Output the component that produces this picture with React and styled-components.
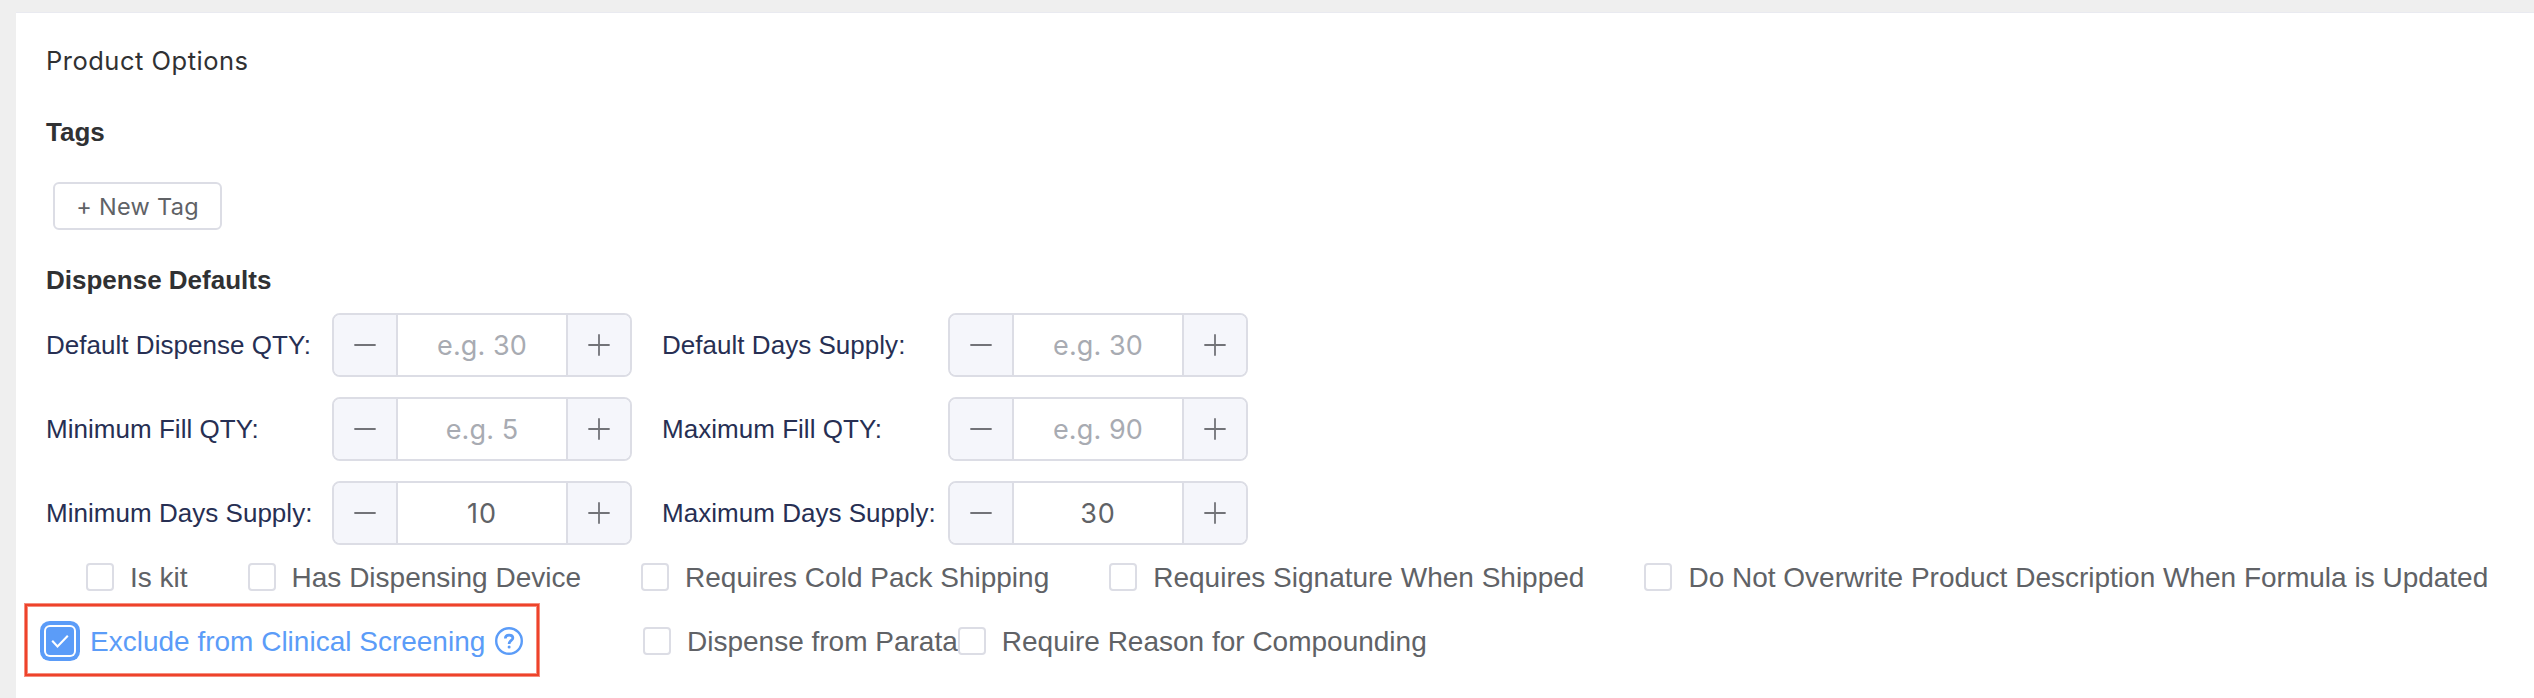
import React, { useState } from "react";
import styled, { createGlobalStyle, css } from "styled-components";

const color = {
  page: "#efefef",
  line: "#dcdde5",
  heading: "#303133",
  label: "#272f53",
  text: "#606266",
  muted: "#a8abb2",
  fill: "#f5f6fb",
  primary: "#5b9cf8",
  alert: "#ee432a",
};

const GlobalStyle = createGlobalStyle`
  *, *::before, *::after { box-sizing: border-box; }
  body {
    margin: 0;
    background: ${color.page};
    font-family: "Liberation Sans", Helvetica, Arial, sans-serif;
  }
`;

const Page = styled.div`
  height: 698px;
  padding: 12px 0 0 16px;
  overflow: hidden;
  background: ${color.page};
`;

const Panel = styled.section`
  height: 100%;
  padding: 28px 0 0 30px;
  border-top: 1px solid #e9eaf0;
  background: #fff;
`;

const Title = styled.h2`
  margin: 0;
  font: 400 25.5px/40px Inter, sans-serif;
  letter-spacing: 0.5px;
  color: ${color.heading};
`;

const SectionHeading = styled.h3`
  margin: ${(p) => p.$top}px 0 0;
  font-size: 26px;
  font-weight: 700;
  line-height: 40px;
  color: ${color.heading};
`;

const TagButton = styled.button`
  display: block;
  width: 169px;
  height: 48px;
  margin: 30px 0 0 7px;
  padding: 1px 0 0;
  border: 2px solid ${color.line};
  border-radius: 6px;
  background: #fff;
  font: 400 23.5px/43px Inter, sans-serif;
  letter-spacing: 0.3px;
  color: ${color.text};
`;

const DefaultsGrid = styled.div`
  display: grid;
  grid-template-columns: 586px 586px;
  gap: 20px 30px;
  margin-top: 13px;
`;

const Field = styled.div`
  display: flex;
  align-items: center;
`;

const FieldLabel = styled.span`
  width: 286px;
  font-size: 26px;
  line-height: 40px;
  letter-spacing: 0.03px;
  white-space: nowrap;
  color: ${color.label};
`;

const Stepper = styled.div`
  display: flex;
  width: 300px;
  height: 64px;
  overflow: hidden;
  border: 2px solid ${color.line};
  border-radius: 8px;
  background: #fff;
`;

const StepButton = styled.button`
  display: flex;
  flex: none;
  align-items: center;
  justify-content: center;
  width: 64px;
  padding: 0;
  border: 0 solid ${color.line};
  ${(p) => (p.$side === "left" ? "border-right-width: 2px;" : "border-left-width: 2px;")}
  background: ${color.fill};
  color: #727378;
`;

const StepInput = styled.input`
  flex: 1;
  min-width: 0;
  padding: 2px 0 0;
  border: 0;
  outline: 0;
  background: transparent;
  font: 400 27px/58px Inter, sans-serif;
  letter-spacing: 1px;
  text-align: center;
  color: ${color.text};

  &::placeholder {
    color: ${color.muted};
    letter-spacing: 0.1px;
    opacity: 1;
  }
`;

const CheckRow = styled.div`
  display: flex;
  align-items: center;
  height: ${(p) => p.$height}px;
  margin: ${(p) => p.$top}px 0 0 ${(p) => p.$left}px;
`;

const CheckLabel = styled.label`
  display: flex;
  flex: none;
  align-items: center;
  gap: 16px;
  margin-right: ${(p) => p.$after}px;
  font-size: 28px;
  line-height: 28px;
  white-space: nowrap;
  color: ${(p) => (p.$checked ? color.primary : color.text)};
`;

const CheckText = styled.span`
  height: 28px;
  line-height: 30px;
`;

const HiddenInput = styled.input`
  position: absolute;
  opacity: 0;
  pointer-events: none;
`;

const Box = styled.span`
  display: flex;
  width: 28px;
  height: 28px;
  border-radius: 4px;
  ${(p) =>
    p.$checked
      ? css`
          background: ${color.primary};
          box-shadow: 0 0 0 2px #fff, 0 0 0 6px ${color.primary};
        `
      : css`
          border: 2px solid ${color.line};
          background: #fff;
        `}
`;

const Highlight = styled.div`
  display: flex;
  flex: none;
  align-items: center;
  align-self: flex-start;
  width: 514px;
  height: 72px;
  margin-right: 104px;
  padding: 2px 0 0 19px;
  border: 2px solid ${color.alert};
  box-shadow: 0 0 0 1px rgba(238, 67, 42, 0.6), inset 0 0 0 1px rgba(238, 67, 42, 0.6);
`;

const HelpMark = styled.span`
  display: flex;
  color: ${color.primary};
`;

const MinusIcon = () => (
  <svg width="22" height="22" viewBox="0 0 22 22" stroke="currentColor" strokeWidth="1.8" strokeLinecap="round">
    <path d="M1 11H21" />
  </svg>
);

const PlusIcon = () => (
  <svg width="22" height="22" viewBox="0 0 22 22" stroke="currentColor" strokeWidth="1.8" strokeLinecap="round">
    <path d="M1 11H21M11 1V21" />
  </svg>
);

const CheckIcon = () => (
  <svg width="28" height="28" viewBox="0 0 28 28" fill="none" stroke="#fff" strokeWidth="2.1">
    <path d="M6.2 13.8L11.5 19.4L21.8 8.8" />
  </svg>
);

const HelpIcon = () => (
  <svg width="28" height="28" viewBox="0 0 28 28" fill="none" stroke="currentColor" strokeWidth="2.4">
    <circle cx="14" cy="14" r="12.8" />
    <path d="M10.3 11.6C10.3 9.2 11.8 8.1 14.1 8.1C16.4 8.1 17.9 9.2 17.9 11.1C17.9 13.6 14.1 13.4 14.1 17" strokeWidth="2.7" />
    <circle cx="14.1" cy="19.9" r="1.5" fill="currentColor" stroke="none" />
  </svg>
);

const FIELDS = [
  { label: "Default Dispense QTY:", placeholder: "e.g. 30", value: "" },
  { label: "Default Days Supply:", placeholder: "e.g. 30", value: "" },
  { label: "Minimum Fill QTY:", placeholder: "e.g. 5", value: "" },
  { label: "Maximum Fill QTY:", placeholder: "e.g. 90", value: "" },
  { label: "Minimum Days Supply:", placeholder: "", value: "10" },
  { label: "Maximum Days Supply:", placeholder: "", value: "30" },
];

const SHIPPING_OPTIONS = [
  "Is kit",
  "Has Dispensing Device",
  "Requires Cold Pack Shipping",
  "Requires Signature When Shipped",
  "Do Not Overwrite Product Description When Formula is Updated",
];

function NumberField({ label, placeholder, value: initial }) {
  const [value, setValue] = useState(initial);
  const step = (d) => setValue((v) => String(Math.max(0, (Number(v) || 0) + d)));
  return (
    <Field>
      <FieldLabel>{label}</FieldLabel>
      <Stepper>
        <StepButton type="button" $side="left" aria-label="Decrease" onClick={() => step(-1)}>
          <MinusIcon />
        </StepButton>
        <StepInput
          aria-label={label}
          value={value}
          placeholder={placeholder}
          onChange={(e) => setValue(e.target.value)}
        />
        <StepButton type="button" $side="right" aria-label="Increase" onClick={() => step(1)}>
          <PlusIcon />
        </StepButton>
      </Stepper>
    </Field>
  );
}

function Checkbox({ label, initial = false, after = 0 }) {
  const [checked, setChecked] = useState(initial);
  return (
    <CheckLabel $checked={checked} $after={after}>
      <HiddenInput type="checkbox" checked={checked} onChange={() => setChecked(!checked)} />
      <Box $checked={checked}>{checked && <CheckIcon />}</Box>
      <CheckText>{label}</CheckText>
    </CheckLabel>
  );
}

export default function App() {
  return (
    <Page>
      <GlobalStyle />
      <Panel>
        <Title>Product Options</Title>
        <SectionHeading $top={31}>Tags</SectionHeading>
        <TagButton type="button">+ New Tag</TagButton>
        <SectionHeading $top={30}>Dispense Defaults</SectionHeading>
        <DefaultsGrid>
          {FIELDS.map((f) => (
            <NumberField key={f.label} {...f} />
          ))}
        </DefaultsGrid>
        <CheckRow $height={28} $top={18} $left={40}>
          {SHIPPING_OPTIONS.map((label) => (
            <Checkbox key={label} label={label} after={60} />
          ))}
        </CheckRow>
        <CheckRow $height={74} $top={13} $left={-21}>
          <Highlight>
            <Checkbox label="Exclude from Clinical Screening" initial after={10} />
            <HelpMark>
              <HelpIcon />
            </HelpMark>
          </Highlight>
          <Checkbox label="Dispense from Parata" />
          <Checkbox label="Require Reason for Compounding" />
        </CheckRow>
      </Panel>
    </Page>
  );
}
